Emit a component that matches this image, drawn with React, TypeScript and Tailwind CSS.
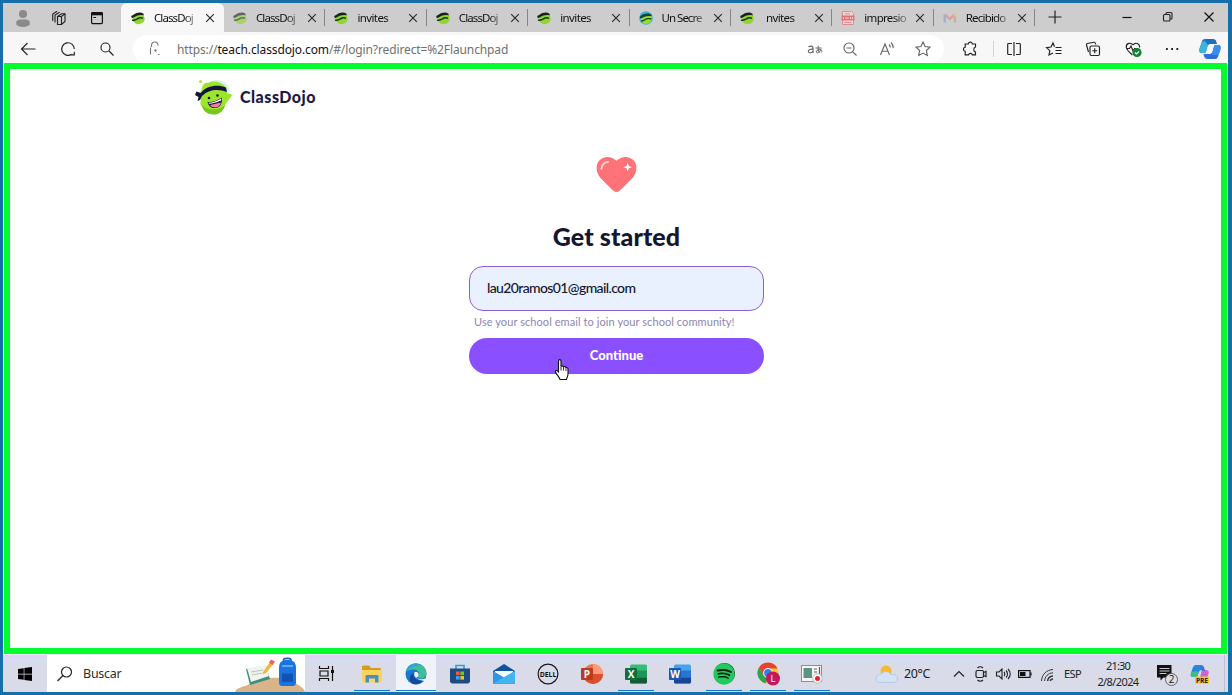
import React from 'react';
import { FaWindows, FaSpotify } from 'react-icons/fa';

type P = { className?: string };

const UI = "font-['Noto_Sans','Open_Sans',sans-serif]";

function DojoMark({ className = '' }: P) {
  return (
    <svg viewBox="0 0 16 16" className={className} width="16" height="16">
      <path d="M3 6.500 C6 3.500 12 3.500 14 6 L14.800 9.500 C13.800 13.500 9 15.200 5.500 13.500 L2.500 10.500Z" fill="#8fd62e" />
      <path d="M1.200 6 L3.500 4.700 C7 2.200 11 2 13.500 3.800 L13.800 5.400 C10.500 4.500 6.800 5.300 4.500 7 L1.800 8.200Z" fill="#15231c" />
      <path d="M2 10.200 C5 11 6.500 9 9 8 C10.500 7.500 12 7.800 13 8.200" fill="none" stroke="#1d3315" strokeWidth="1.500" />
    </svg>
  );
}

function DojoSecretMark() {
  return (
    <svg viewBox="0 0 16 16" width="16" height="16">
      <circle cx="8" cy="8" r="6.800" fill="#35b3d8" />
      <path d="M3 7 C6 4 12 4 14 7 C15 11 10 15.500 5.500 13.500 L2.500 10Z" fill="#a2d92b" />
      <path d="M1.800 7 C4 3.500 10 2.500 13.500 4.800 L13.500 6.300 C9.500 5.200 6 6.500 2.500 8.800Z" fill="#11403d" />
      <path d="M3 11 C5.500 11.500 6.500 9.500 9 8.700 C10.500 8.300 12 8.500 13.500 9" fill="none" stroke="#175a38" strokeWidth="1.400" />
    </svg>
  );
}

function PdfMark() {
  return (
    <svg viewBox="0 0 16 16" width="16" height="16">
      <path d="M2.500 1.500h9l2 2V14.500H2.500z" fill="#f2d6d6" stroke="#dc8d90" strokeWidth="1" />
      <path d="M5 3.800h5M4.500 12.500h7" stroke="#dc8d90" strokeWidth="1" />
      <rect x="1.500" y="5.500" width="13" height="5" fill="#dc7478" />
      <path d="M3.500 7v2M6 7v2M8 7v2M10.500 7v2M12.500 7v2" stroke="#f6dada" strokeWidth=".9" />
    </svg>
  );
}

function GmailMark() {
  return (
    <svg viewBox="0 0 16 16" width="16" height="16" opacity=".65">
      <path d="M2.700 12.500V4.500" stroke="#7ba5e6" strokeWidth="2.400" />
      <path d="M12.900 12.500V4.500" stroke="#c8a07a" strokeWidth="2.400" />
      <path d="M2.700 4.500L7.800 8.800L12.900 4.500" fill="none" stroke="#e5877c" strokeWidth="2.400" />
      <path d="M12.900 3.600v3" stroke="#eec05d" strokeWidth="2.400" />
    </svg>
  );
}

function X() {
  return (
    <svg width="10" height="10" viewBox="0 0 10 10" className="shrink-0">
      <path d="M1.200 1.200L8.800 8.800M8.800 1.200L1.200 8.800" stroke="#2b2b2b" strokeWidth="1.200" />
    </svg>
  );
}

const tabs: { label: string; icon: React.ReactNode; active?: boolean; text: string }[] = [
  { label: 'ClassDoj', icon: <DojoMark />, active: true, text: 'tracking-[-0.9px]' },
  { label: 'ClassDoj', icon: <DojoMark className="opacity-60" />, text: 'tracking-[-0.9px]' },
  { label: 'invites', icon: <DojoMark />, text: 'tracking-[-0.6px]' },
  { label: 'ClassDoj', icon: <DojoMark />, text: 'tracking-[-0.9px]' },
  { label: 'invites', icon: <DojoMark />, text: 'tracking-[-0.6px]' },
  { label: 'Un Secre', icon: <DojoSecretMark />, text: 'tracking-[-1px]' },
  { label: 'nvites', icon: <DojoMark />, text: 'pl-[3px] tracking-[-0.6px]' },
  { label: 'impresio', icon: <PdfMark />, text: 'tracking-[-0.7px]' },
  { label: 'Recibido', icon: <GmailMark />, text: 'tracking-[-0.8px]' },
];

function TabBar() {
  return (
    <div className="flex h-[29px] shrink-0 items-stretch bg-[#cdcdcd]">
      <div className="flex w-[118px] items-center pl-[12px]">
        <svg width="16" height="20" viewBox="0 0 16 20">
          <circle cx="8" cy="6" r="4" fill="#8a8a8a" />
          <path d="M1.500 17C0 11.500 4 11.500 8 11.500S16 11.500 14.500 17C11 19.500 5 19.500 1.500 17Z" fill="#8a8a8a" />
        </svg>
        <svg width="16" height="16" viewBox="0 0 16 16" className="ml-[20px]" fill="none" stroke="#222" strokeWidth="1.100">
          <path d="M6.500 6.500L10.500 3.800H14V11.500L10.500 14.500H6.500Z" />
          <path d="M6.500 6.500H10.500L14 3.800M10.500 6.500V14.300" />
          <path d="M4 12.500V5L8.500 2.200M1.700 11V4L6 1.300" />
        </svg>
        <svg width="14" height="14" viewBox="0 0 14 14" className="ml-[23px]" fill="none" stroke="#111">
          <rect x="1.600" y="1.600" width="10.800" height="11" rx="1" strokeWidth="1.200" />
          <path d="M1.500 2.800H12.500" strokeWidth="3" />
          <path d="M3.500 6.500h2.500" strokeWidth="1" />
        </svg>
      </div>
      {tabs.map((t, i) => (
        <div
          key={i}
          className={
            t.active
              ? 'flex w-[103px] shrink-0 items-center rounded-t-[6px] bg-[#f7f7f7] pl-[9px]'
              : 'flex w-[101.4px] shrink-0 items-center pl-[8px]'
          }
        >
          <span className="shrink-0">{t.icon}</span>
          <span
            className={`ml-[8px] w-[43px] shrink-0 whitespace-nowrap text-[11.500px] leading-[17px] text-[#111] [mask-image:linear-gradient(to_right,black_68%,rgb(0_0_0/0.35)_100%)] ${t.text}`}
          >
            {t.label}
          </span>
          <span className="ml-[8px] flex">
            <X />
          </span>
          {!t.active && <span className="ml-auto h-[17px] w-px bg-[#858585]" />}
        </div>
      ))}
      <svg width="14" height="14" viewBox="0 0 14 14" className="ml-[13px] mt-[7px]">
        <path d="M7 .5V13.500M.5 7H13.500" stroke="#222" strokeWidth="1.200" />
      </svg>
      <div className="ml-auto flex items-center gap-[29px] pr-[13px] pb-px">
        <svg width="12" height="12" viewBox="0 0 12 12">
          <path d="M1.500 6.500H10.500" stroke="#111" strokeWidth="1.200" />
        </svg>
        <svg width="12" height="12" viewBox="0 0 12 12" fill="none" stroke="#222" strokeWidth="1.100">
          <rect x="1.500" y="3.500" width="6.500" height="6.500" rx="1" />
          <path d="M4 3.300V2.500C4 2 4.500 1.500 5 1.500H9C9.600 1.500 10 2 10 2.500V7C10 7.600 9.600 8 9 8H8.200" />
        </svg>
        <svg width="12" height="12" viewBox="0 0 12 12">
          <path d="M1.500 1.500L10.500 10.500M10.500 1.500L1.500 10.500" stroke="#111" strokeWidth="1.200" />
        </svg>
      </div>
    </div>
  );
}

function Ic({ children, className = '', color = '#222' }: { children: React.ReactNode; className?: string; color?: string }) {
  return (
    <svg width="20" height="20" viewBox="0 0 20 20" fill="none" stroke={color} strokeWidth="1.150" className={`shrink-0 ${className}`}>
      {children}
    </svg>
  );
}

function Toolbar() {
  return (
    <div className="flex h-[31px] shrink-0 items-center bg-[#f7f7f7] pt-[3px]">
      <Ic className="ml-[15px]">
        <path d="M17.500 10H3.500M9.500 4L3.500 10L9.500 16" />
      </Ic>
      <Ic className="ml-[20px]">
        <path d="M13.500 15.300A6.300 6.300 0 1 1 16.300 10M16.300 12.800V15.800H13.300" />
      </Ic>
      <Ic className="ml-[19px]">
        <circle cx="8.500" cy="8.500" r="4.500" />
        <path d="M12 12L16.500 16.500" />
      </Ic>
      <div className="ml-[16px] flex h-[28px] w-[811px] items-center rounded-full bg-white">
        <Ic className="ml-[12px]" color="#777">
          <path d="M6.500 8V6.500C6.500 1.800 13 2 13 6.500M5.500 8.500V15.500M14.500 15.500H13" />
          <circle cx="10.500" cy="11.500" r=".6" />
        </Ic>
        <span className="ml-[12px] pt-px whitespace-nowrap text-[12px] leading-[18px] tracking-[-0.12px] text-[#707070]">
          https://<span className="text-[#111]">teach.classdojo.com</span>/#/login?redirect=%2Flaunchpad
        </span>
        <div className="ml-auto flex items-center pr-[11px]">
          <Ic color="#666">
            <path d="M3.500 7.800C5 6.600 8 6.800 8 9V14M8 10.200C5.500 10 3.300 10.500 3.300 12.300S6.500 14.500 8 12.300" />
            <path d="M10.500 9H16.500M13.300 6.800C13 9.500 13.200 12 14.300 13.600M16 9.800C15.300 12.600 13.800 13.900 12.400 13.900S10.600 11.200 13.200 10.800S18 11.500 16.300 13.500" strokeWidth="1" />
          </Ic>
          <Ic className="ml-[15px]" color="#666">
            <circle cx="9" cy="9" r="5" />
            <path d="M12.800 12.800L16.500 16.500M6.500 9H11.500" />
          </Ic>
          <Ic className="ml-[17px]" color="#666">
            <path d="M3.500 16L8 5L12.500 16M5 12.200H11M12 5.500C13 6.500 13.300 7.500 13.300 8.500M14 3.500C15.500 5 16.300 6.500 16.300 9" />
          </Ic>
          <Ic className="ml-[16px]" color="#666">
            <path d="M10 3L12.100 7.500L17 8.100L13.400 11.500L14.300 16.500L10 14.100L5.700 16.500L6.600 11.500L3 8.100L7.900 7.500Z" />
          </Ic>
        </div>
      </div>
      <Ic className="ml-[16px]">
        <path d="M15.500 8V5H12.300C12.300 2.500 8.300 2.500 8.300 5H5.200V8.200C2.800 8.400 2.800 12 5.200 12.200V15.800H8.500C9 13.800 12 13.800 12.300 15.800H15.500V13C13.200 12.800 13.200 8.500 15.500 8Z" />
      </Ic>
      <span className="ml-[13px] h-[16px] w-px bg-[#d5d5d5]" />
      <Ic className="ml-[10px]">
        <path d="M8 4.500H4.500C4 4.500 3.700 4.800 3.700 5.300V14.700C3.700 15.200 4 15.500 4.500 15.500H8M12 4.500H15.500C16 4.500 16.300 4.800 16.300 5.300V14.700C16.300 15.200 16 15.500 15.500 15.500H12M10 3V17" />
      </Ic>
      <Ic className="ml-[20px]">
        <path d="M10.500 7.800L9 4L7 8L2.500 8.600L5.800 11.700L5 16L9 14M11.500 8.500H17.500M11.500 11.500H17.500M11.500 14.500H17.500" />
      </Ic>
      <Ic className="ml-[19px]">
        <rect x="7" y="7" width="9.500" height="9.500" rx="1.500" />
        <path d="M11.700 9.300V14.200M9.300 11.700H14.200M5.500 13L3.500 6C3.300 5.200 3.600 4.800 4.300 4.500L11 3.300C12 3.200 12.500 3.500 12.800 5.500" />
      </Ic>
      <Ic className="ml-[20px]">
        <path d="M10 6C8 3 3 4 3.300 8.300C3.500 11 7 14 9.500 16M10 6C12 3 17 4 16.600 8.500M3.500 9.500H6.500L8 7L10 12L11.500 9.500H14" />
        <circle cx="14" cy="13.500" r="4" fill="#168038" stroke="#168038" />
        <path d="M12 13.500L13.500 15L16 12.300" stroke="#fff" />
      </Ic>
      <Ic className="ml-[19px]">
        <path d="M4 10H5.800M9.200 10H11M14.400 10H16.200" strokeWidth="1.800" />
      </Ic>
      <svg width="24" height="24" viewBox="0 0 24 24" className="ml-[16px] shrink-0">
        <path d="M7 2H15C17 2 18 3 18.300 4.500L19 7H13C10 7 9.500 9 9 11L7.500 16H4C1 16 1 13.500 1.700 11L4 4.500C4.700 2.700 5.500 2 7 2Z" fill="#1b6fc4" />
        <path d="M4 5L1.500 12C1 15 2 16 4 16H7.500L10 8L7 4Z" fill="#3cb6d8" />
        <path d="M17 22H9.500C7.500 22 6.500 21 6 19L5.500 17H11C14 17 14.500 15 15 13L16.500 8H20C23 8 23 10.500 22.300 13L20 19.500C19.300 21.300 18.500 22 17 22Z" fill="#2c6fdc" />
        <path d="M16.500 8H20C23 8 22.800 10.500 22.300 12.500L20.500 18H13.500C14.500 16 15 14 15.200 12.500Z" fill="#3a8cf0" />
      </svg>
    </div>
  );
}

function DojoLogo() {
  return (
    <svg width="38" height="38" viewBox="0 0 38 38" className="shrink-0">
      <ellipse cx="22" cy="14" rx="13" ry="12" fill="#d9f3ee" />
      <circle cx="5.500" cy="3.500" r="1.500" fill="#a4e34a" />
      <path d="M7 11C7 6 11 4 13 5C18 2 26 4 30 8C32 11 31 14 33 16C36 15 38 17 36 19C34 21 32 24 30 27C29 32 25 36 20 36C14 37 9 34 8 29C5 28 5 24 6 22C4 18 5 14 7 11Z" fill="#9be52b" />
      <path d="M7 27C7 32 12 37 20 36.500C25 36 29 32 30 27C24 33 13 33 7 27Z" fill="#74c91c" />
      <path d="M6 15C11 8 22 6 31 9.500L32 14C24 10.500 14 11 7 18L5 22L2.500 23L3.500 19L0 17L1.500 13.500Z" fill="#17133f" />
      <circle cx="14" cy="20" r="1.300" fill="#17133f" />
      <circle cx="22.500" cy="17.500" r="1.300" fill="#17133f" />
      <path d="M12.500 24C17 24.500 23 22.500 26.500 19.500C28 25 25 29.500 20.500 30C16.500 30.500 13.500 28 12.500 24Z" fill="#17133f" />
      <path d="M15 27C17.500 26.500 21 25.500 26 24.500C25 28 23 29.500 20 29.500C17.500 29.500 16 28.500 15 27Z" fill="#f47f9b" />
      <path d="M13.500 24.700C17 24.700 22.500 23 26 20.500L26.300 22.200C22 24.500 17.500 25.500 14 25.700Z" fill="#fff" />
    </svg>
  );
}

function Page() {
  return (
    <main className="mx-px flex min-h-0 grow flex-col border-6 border-[#00ff2a] bg-white font-['Lato',sans-serif]">
      <div className="ml-[185px] mt-[9px] flex h-[38px] items-center">
        <DojoLogo />
        <span className="ml-[7px] text-[16px] leading-[20px] font-black tracking-[0.5px] text-[#1d1747]">ClassDojo</span>
      </div>
      <div className="ml-[459px] flex w-[295px] flex-col">
        <svg width="41" height="37" viewBox="0 0 42 38" className="mt-[40px] mr-px self-center">
          <path d="M21 37C19 37 17 35 14 32L5 23C0 18 -1 10 3 5C8 -0.500 16 0 21 5C26 0 34 -0.500 39 5C43 10 42 18 37 23L28 32C25 35 23 37 21 37Z" fill="#ff7378" />
          <path d="M5.500 13C6 9 8.500 6.300 12.500 6" fill="none" stroke="#ffd9da" strokeWidth="1.800" strokeLinecap="round" />
          <path d="M32.500 7L33.700 10.300L37 11.500L33.700 12.700L32.500 16L31.300 12.700L28 11.500L31.300 10.300Z" fill="#fff" />
        </svg>
        <h1 className="mt-[26px] text-center text-[25px] leading-[34px] font-black tracking-[0.1px] text-[#16162e]">Get started</h1>
        <div className="mt-[13px] flex h-[45px] items-center rounded-[14px] border border-[#8c5fd0] bg-[#e9f0fe] pb-[2px] pl-[17px] text-[14px] font-medium text-[#15152a]">
          <span className="tracking-[-0.62px]">lau20ramos01@gmail.com</span>
        </div>
        <p className="mt-[3px] ml-[5px] text-[11px] leading-[16px] whitespace-nowrap tracking-[0.08px] text-[#8d86b0]">
          Use your school email to join your school community!
        </p>
        <button className="relative mt-[8px] h-[36px] rounded-full bg-[#8a50ff] pb-px text-[13px] font-black text-white">
          Continue
          <svg width="16" height="24" viewBox="0 0 16 24" className="absolute top-[20px] left-[85px]">
            <path
              d="M4.500 14V3C4.500 1.200 7 1.200 7 3V8.500C7.500 7.500 9.300 7.700 9.500 9C10.200 8.200 11.800 8.600 12 9.800C12.800 9.200 14 9.800 14 11V16C14 18 13 19 12.500 21.500H6C5.500 19 2.500 17 1.500 14C1 12.500 2.800 12 3.500 13Z"
              fill="#fff"
              stroke="#111"
              strokeWidth="1.100"
            />
            <path d="M7 8.500V12.500M9.500 9.500V12.500M12 10.500V13" stroke="#111" strokeWidth=".9" />
          </svg>
        </button>
      </div>
    </main>
  );
}

function Desk() {
  return (
    <svg width="70" height="35" viewBox="0 0 70 35" className="ml-auto shrink-0 self-end">
      <path d="M0 35C2 30 9 30 17 26C30 19 50 19 60 26C65 29 69 31 70 35Z" fill="#d9b48a" />
      <path d="M11 12L31 9L35 22L15 28Z" fill="#3c8f80" />
      <path d="M12 11L31 8.500L34 19L16 25Z" fill="#f1f4ec" />
      <path d="M16 15L28 13M17 18L27 16" stroke="#b8c3bb" strokeWidth="1" />
      <path d="M28 15L35 5L38.500 7L31 16L27.500 17.500Z" fill="#f2b63f" />
      <path d="M34 5.500L36 2.500L40 4.500L37.500 8Z" fill="#e5645b" />
      <path d="M48.500 5V3C48.500 .8 56 .8 56 3V5" fill="none" stroke="#1d5fc0" strokeWidth="1.600" />
      <path d="M44 11C44 5 47 3 52.500 3S61 5 61 11V26C61 28.500 59 29 57 29H48C46 29 44 28.500 44 26Z" fill="#1a74e0" />
      <path d="M47 16.500H58V25H47Z" fill="#1252b5" />
      <path d="M47 9H58" stroke="#7cc0ff" strokeWidth="1.400" />
    </svg>
  );
}

function OfficeMark({ letter, tile, c1, c2, c3 }: { letter: string; tile: string; c1: string; c2: string; c3: string }) {
  return (
    <svg width="24" height="22" viewBox="0 0 24 22">
      <rect x="6" y="1.500" width="17" height="19" rx="1.500" fill={c1} />
      <rect x="6" y="7.500" width="17" height="7" fill={c2} />
      <path d="M6 14.500H23V19Q23 20.500 21.500 20.500H7.500Q6 20.500 6 19Z" fill={c3} />
      <rect x="1" y="5" width="12" height="12" rx="1" fill={tile} />
      <text x="7" y="14.500" textAnchor="middle" fontSize="10" fontWeight="bold" fill="#fff" fontFamily="Open Sans, sans-serif">
        {letter}
      </text>
    </svg>
  );
}

function Slot({ children, line, active }: { children: React.ReactNode; line?: boolean; active?: boolean }) {
  return (
    <div className="flex w-[44px] shrink-0 flex-col items-center px-[2px]">
      <div className={`flex w-[40px] grow items-center justify-center pt-[2px] ${active ? 'bg-[#f1f3fa]' : ''}`}>{children}</div>
      <div className={`h-px ${active ? 'w-[40px]' : 'w-[36px]'} ${line || active ? 'bg-[#0f78cc]' : 'bg-transparent'}`} />
      <div className={`h-px ${active ? 'w-[40px] bg-[#f1f3fa]' : 'w-[36px]'}`} />
    </div>
  );
}

function Taskbar() {
  return (
    <div className="flex h-[38px] shrink-0 items-stretch border-t border-[#efe6fa] bg-gradient-to-b from-[#dfd2f2] from-[0px] via-[#d2def4] via-[5px] to-[#d9dbe9] to-[8px]">
      <div className="flex w-[44px] items-center justify-center pt-px text-[16px] text-black">
        <FaWindows />
      </div>
      <div className="flex w-[258px] items-center bg-white pl-[9px]">
        <svg width="18" height="18" viewBox="0 0 18 18" fill="none" stroke="#222" strokeWidth="1.200">
          <circle cx="10.500" cy="7" r="5" />
          <path d="M7 10.500L1.500 16" />
        </svg>
        <span className="ml-[9px] pt-[2px] text-[12.500px] tracking-[-0.25px] text-[#2c2c2c]">Buscar</span>
        <Desk />
      </div>
      <div className="flex w-[43px] items-center justify-center">
        <svg width="17" height="17" viewBox="0 0 17 17" fill="none" stroke="#111" strokeWidth="1.200">
          <path d="M1.500 1V3.500H10.500V1M1.500 16V13.500H10.500V16M2 6H10V11H2ZM14.500 1V16" />
          <path d="M14.500 5V8" strokeWidth="3" />
        </svg>
      </div>
      <div className="ml-[2px] flex">
        <Slot line>
          <svg width="20" height="18" viewBox="0 0 20 18">
            <path d="M0 2C0 1 .5.500 1.500.500H7L9 3H17.500C18.500 3 19 3.500 19 4.500V16H0Z" fill="#d99a1e" />
            <path d="M0 5H20V16C20 17 19.500 17.500 18.500 17.500H1.500C.5 17.500 0 17 0 16Z" fill="#fbd35c" />
            <path d="M3.500 17.500V11.500C3.500 10.500 4 10 5 10H15C16 10 16.500 10.500 16.500 11.500V17.500H13V13.500H7V17.500Z" fill="#4a8fc4" />
          </svg>
        </Slot>
        <Slot active>
          <svg width="22" height="22" viewBox="0 0 22 22">
            <circle cx="11" cy="11" r="10.500" fill="#1a78cf" />
            <path d="M.7 9C2 3 6.500.5 11 .5C17 .5 21.500 5 21.500 10C21.500 13.500 19 15.500 16 15.500C13 15.500 12.500 14 13.500 12.500C15 9 12 6.500 8.500 6.500C5 6.500 2 7.500.7 9Z" fill="#3fbf96" />
            <path d="M.7 9C2 3 6.500.5 11 .5C13 .5 15 1 16.500 2C11 3 5 4 .7 9Z" fill="#2ba5d8" />
            <path d="M9 10C7.500 14 11 18.500 18 17.500C15 21.500 10 22 6.500 20C3.500 16.500 4.500 11.500 9 10Z" fill="#15489c" />
            <path d="M9.500 9.500C8 13.500 12 17.800 21 15.500L19.500 18C17 17.500 13 17 11 14.500C13.500 14.500 14 12 13.300 10.500C12.500 9 10.500 8.800 9.500 9.500Z" fill="#f1f3fa" />
          </svg>
        </Slot>
        <Slot>
          <svg width="20" height="20" viewBox="0 0 20 20">
            <path d="M6 5V1.500H14V5" fill="none" stroke="#2c9ee0" strokeWidth="1.600" />
            <path d="M0 4.500H20V17C20 18.500 19 19.500 17.500 19.500H2.500C1 19.500 0 18.500 0 17Z" fill="#1d4a80" />
            <rect x="6" y="7.500" width="3.600" height="3.600" fill="#ee5a35" />
            <rect x="10.400" y="7.500" width="3.600" height="3.600" fill="#84bd32" />
            <rect x="6" y="12" width="3.600" height="3.600" fill="#35a8e6" />
            <rect x="10.400" y="12" width="3.600" height="3.600" fill="#f8bd27" />
          </svg>
        </Slot>
        <Slot>
          <svg width="22" height="20" viewBox="0 0 22 20">
            <path d="M0 7L11 0L22 7V19.500H0Z" fill="#10519b" />
            <path d="M2 7H20V14H2Z" fill="#f4faff" />
            <path d="M0 7L11 13.500L22 7V19.500H0Z" fill="#2b98e3" />
            <path d="M0 19.500L22 7V19.500Z" fill="#40b5ee" />
          </svg>
        </Slot>
        <Slot>
          <svg width="22" height="22" viewBox="0 0 22 22">
            <circle cx="11" cy="11" r="9.900" fill="none" stroke="#161616" strokeWidth="1.200" />
            <text x="11" y="13.700" textAnchor="middle" fontSize="7.500" fontWeight="bold" fill="#111" textLength="16.500" lengthAdjust="spacingAndGlyphs" fontFamily="Open Sans, sans-serif">
              DELL
            </text>
          </svg>
        </Slot>
        <Slot>
          <svg width="24" height="22" viewBox="0 0 24 22">
            <circle cx="13" cy="11" r="10" fill="#ee7350" />
            <path d="M13 1A10 10 0 0 1 23 11H13Z" fill="#ff9a78" />
            <path d="M3 11A10 10 0 0 0 23 11Z" fill="#d8512f" />
            <rect x="1" y="5" width="12" height="12" rx="1" fill="#bf3a1d" />
            <text x="7" y="14.500" textAnchor="middle" fontSize="10" fontWeight="bold" fill="#fff" fontFamily="Open Sans, sans-serif">
              P
            </text>
          </svg>
        </Slot>
        <Slot line>
          <OfficeMark letter="X" tile="#107037" c1="#35bd78" c2="#1d9556" c3="#145c38" />
        </Slot>
        <Slot>
          <OfficeMark letter="W" tile="#1b57b5" c1="#45a3ea" c2="#2874d0" c3="#184596" />
        </Slot>
        <Slot line>
          <span className="flex size-[21px] items-center justify-center rounded-full bg-[#0c2413] text-[22px] text-[#24c95e]">
            <FaSpotify className="shrink-0" />
          </span>
        </Slot>
        <Slot line>
          <svg width="25" height="24" viewBox="0 0 25 24">
            <circle cx="12" cy="11" r="10.500" fill="#f9c824" />
            <path d="M3 5.500A10.500 10.500 0 0 1 21.500 6.500H12L7.500 13.500Z" fill="#e64132" />
            <path d="M3 5.500L7.500 13.500L12 16L9.500 21.200A10.500 10.500 0 0 1 3 5.500Z" fill="#2ca351" />
            <circle cx="12" cy="11" r="4.900" fill="#fff" />
            <circle cx="12" cy="11" r="3.900" fill="#3a7de8" />
            <circle cx="17" cy="16.500" r="7" fill="#c4185f" />
            <text x="17" y="20" textAnchor="middle" fontSize="9.500" fill="#fff" fontFamily="Open Sans, sans-serif">
              L
            </text>
          </svg>
        </Slot>
        <Slot line>
          <svg width="24" height="20" viewBox="0 0 24 20">
            <rect x="1.500" y="1.500" width="20" height="16" fill="#f7f7f5" stroke="#8b8f92" />
            <rect x="3.500" y="4" width="8.500" height="10" fill="#5b9387" />
            <path d="M14 5H17M14 8H17M19.500 3V10" stroke="#5c6064" strokeWidth="1.200" />
            <circle cx="17.500" cy="14.500" r="4.700" fill="#fff" stroke="#b8b8b8" />
            <circle cx="17.500" cy="14.500" r="2.500" fill="#dd2436" />
          </svg>
        </Slot>
      </div>
      <div className="ml-[41px] flex items-center">
        <svg width="24" height="20" viewBox="0 0 24 20">
          <circle cx="11" cy="7" r="5.500" fill="#f5b935" />
          <path d="M5 18.500C1 18.500 0 15.500 1.500 13.500C1.500 11 4 10 6 10.500C8 6.500 14 6.500 15.500 10.500C20 10 23 12 22.500 15C22.500 17.500 20.500 18.500 18 18.500Z" fill="#d3e2f4" stroke="#aec4df" strokeWidth=".8" />
        </svg>
        <span className="ml-[5px] w-[32px] pt-[2px] text-[12.500px] whitespace-nowrap tracking-[-0.4px] text-[#222]">20°C</span>
      </div>
      <svg width="12" height="12" viewBox="0 0 12 12" className="ml-[17px] self-center">
        <path d="M1 8.500L6 3.500L11 8.500" fill="none" stroke="#222" strokeWidth="1.200" />
      </svg>
      <svg width="14" height="18" viewBox="0 0 14 18" className="ml-[9px] self-center" fill="none" stroke="#222" strokeWidth="1.200">
        <rect x="2" y="5.500" width="7.500" height="7" rx="1.500" />
        <path d="M9.500 7.500L12 6.500V11.500L9.500 10.500M3.500 3C5 1.500 7.500 1.500 9 3M3.500 15C5 16.500 7.500 16.500 9 15" />
      </svg>
      <svg width="16" height="14" viewBox="0 0 16 14" className="ml-[7px] self-center" fill="none" stroke="#222" strokeWidth="1.100">
        <path d="M1.500 5V9H4L7 12V2L4 5ZM9 5C10 6 10 8 9 9M11 3.500C13 5.500 13 8.500 11 10.500M13 2C16 5 16 9 13 12" />
      </svg>
      <svg width="14" height="10" viewBox="0 0 14 10" className="ml-[7px] self-center">
        <rect x=".6" y="1.600" width="11.400" height="6.800" fill="none" stroke="#111" strokeWidth="1.200" />
        <rect x="2" y="3" width="5.500" height="4" fill="#111" />
        <path d="M13 3.500V6.500" stroke="#111" strokeWidth="1.200" />
      </svg>
      <svg width="14" height="14" viewBox="0 0 14 14" className="mt-[2px] ml-[8px] self-center" fill="none" stroke="#333" strokeWidth="1">
        <path d="M1.500 13C2 6 6.500 2 13 1.500M4.500 13C5 8.500 8 5 13 4.800" />
        <path d="M7.500 13C8 10.500 10 8.200 13 8M10.300 13C10.500 12 11.500 11 13 11" strokeWidth="1.500" />
      </svg>
      <span className="ml-[10px] w-[18px] self-center pt-px text-[11px] tracking-[-0.6px] whitespace-nowrap text-[#222]">ESP</span>
      <div className="ml-[12px] flex w-[48px] flex-col items-center justify-center text-[11px] leading-[16px] whitespace-nowrap text-[#222]">
        <span className="tracking-[-0.8px]">21:30</span>
        <span className="tracking-[-0.6px]">2/8/2024</span>
      </div>
      <svg width="24" height="26" viewBox="0 0 24 26" className="mt-[2px] ml-[14px] self-center">
        <path d="M1 3H15.500V15.500H7.500L4.500 18.500V15.500H1Z" fill="#111" />
        <path d="M3.500 6.500H13.500M3.500 9H13.500M3.500 11.500H10.500" stroke="#d9dbe9" strokeWidth=".9" />
        <circle cx="15.500" cy="17.500" r="6" fill="#dcdee9" stroke="#555" strokeWidth=".9" />
        <text x="15.500" y="21.200" textAnchor="middle" fontSize="10" fill="#111" fontFamily="Open Sans, sans-serif">
          2
        </text>
      </svg>
      <svg width="22" height="22" viewBox="0 0 22 22" className="ml-[9px] self-center">
        <path d="M6 2H12C14 2 14.500 3 15 5L13 7C11 7 10 8 9.500 10L8 14H4C1.500 14 1.500 12 2 10L4 4Z" fill="#2a86dc" />
        <path d="M2.500 9L8 8L9.500 10L8 14H4C1.500 14 1.500 12 2.500 9Z" fill="#40b98d" />
        <path d="M13 7H17C20 7 20 9.500 19.500 11L17 17H8L11 14Z" fill="#cb64d4" />
        <path d="M12 3L15 4L16 8L13 8Z" fill="#5167de" />
        <rect x="6" y="13.500" width="14" height="7" rx="1" fill="#f8c71f" />
        <text x="13" y="19.500" textAnchor="middle" fontSize="6.500" fontWeight="bold" fill="#222" fontFamily="Open Sans, sans-serif">
          PRE
        </text>
      </svg>
      <span className="mr-[3px] ml-auto w-px bg-[#bcc1d2]" />
    </div>
  );
}

export default function App() {
  return (
    <div
      className={`flex h-[695px] w-[1232px] flex-col overflow-hidden border-t-[3px] border-r-4 border-b-[3px] border-l-[3px] border-[#176fa9] bg-[#ecfbe4] ${UI}`}
    >
      <TabBar />
      <Toolbar />
      <Page />
      <Taskbar />
    </div>
  );
}
